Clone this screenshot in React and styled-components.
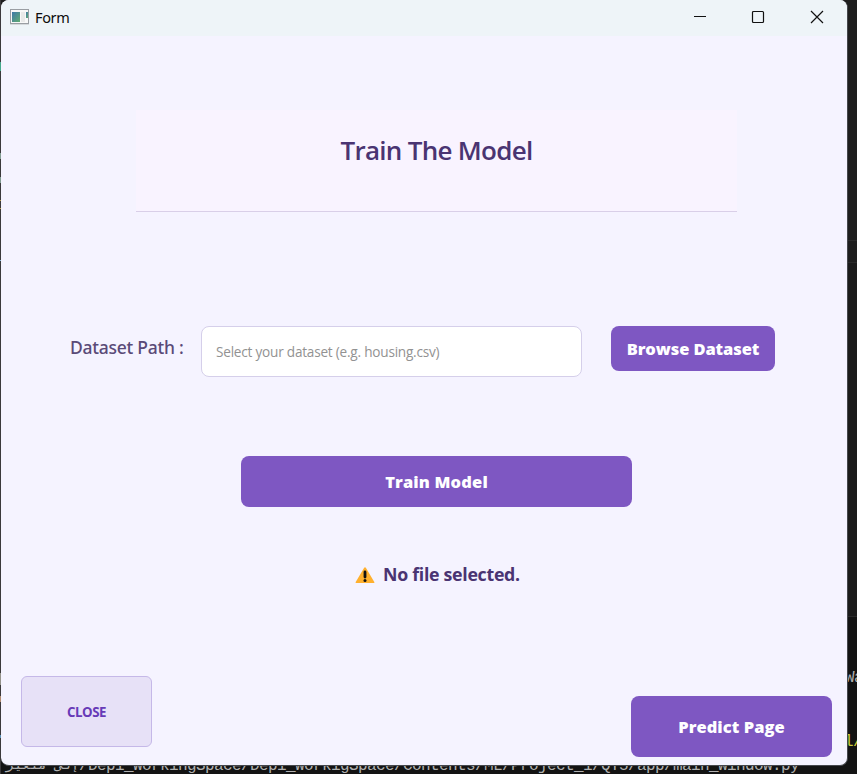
import React from "react";
import styled, { createGlobalStyle } from "styled-components";

const GlobalStyle = createGlobalStyle`
  *, *::before, *::after { box-sizing: border-box; }
  html, body { margin: 0; overflow: hidden; }
  body { font-family: "Open Sans", "Noto Sans", sans-serif; }
  button, input { font: inherit; margin: 0; }
`;

const Desktop = styled.main`
  position: relative;
  width: 857px;
  height: 774px;
  overflow: hidden;
  background: linear-gradient(90deg, #3b393b 0 1px, transparent 1px),
    linear-gradient(180deg, #1e1e1e 0 240px, #2b2b2b 240px 241px, #1e1e1e 241px 262px, #2a2a2a 262px 263px, #1b1b1b 263px 616px, #2b2b2b 616px 617px, #131313 617px);
`;

const TerminalText = styled.div`
  position: absolute;
  top: ${(p) => p.$top}px;
  left: ${(p) => p.$left}px;
  color: ${(p) => p.$color || "#b0b0b0"};
  font: ${(p) => p.$size || 16}px/18px "Liberation Mono", monospace;
  letter-spacing: ${(p) => (p.$size ? 0 : -0.6)}px;
  white-space: pre;
`;

const EdgeMark = styled.i`
  position: absolute;
  left: 0;
  width: 1px;
  top: ${(p) => p.$top}px;
  height: ${(p) => p.$height}px;
  background: ${(p) => p.$color};
`;

const Window = styled.section`
  position: absolute;
  top: 0;
  left: 1px;
  width: 847px;
  height: 766px;
  display: flex;
  flex-direction: column;
  border-right: 1px solid #45474c;
  border-bottom: 1px solid #45474c;
  border-radius: 8px;
  overflow: hidden;
  background: #f5f3ff;
`;

const TitleBar = styled.header`
  height: 36px;
  flex: none;
  display: flex;
  align-items: flex-start;
  padding-left: 9px;
  background: #eef4f8;
`;

const AppIcon = styled.svg`
  width: 19px;
  height: 16px;
  margin-top: 9px;
`;

const WindowTitle = styled.span`
  margin: 7px auto 0 6px;
  color: #0c0c0c;
  font: 14.5px/20px "Noto Sans", sans-serif;
  letter-spacing: -0.35px;
`;

const Caption = styled.button`
  width: ${(p) => p.$width || 58}px;
  height: 34px;
  padding: 0;
  border: 0;
  background: none;
  display: flex;
  align-items: center;
  justify-content: center;
  svg { width: 14px; height: 14px; }
`;

const Content = styled.div`
  flex: 1;
  display: flex;
  flex-direction: column;
`;

const Heading = styled.h1`
  width: 601px;
  height: 102px;
  margin: 74px 0 0 135px;
  padding-top: 22px;
  border-bottom: 1px solid #d9cfe8;
  background: #f9f3ff;
  color: #4a3472;
  font-weight: 600;
  font-size: 26px;
  line-height: 36px;
  letter-spacing: -0.7px;
  text-align: center;
`;

const PathRow = styled.div`
  display: flex;
  align-items: flex-start;
  margin-top: 114px;
  padding-left: 69px;
`;

const Label = styled.label`
  width: 131px;
  padding-top: 9px;
  color: #5a4a78;
  font-weight: 500;
  font-size: 17.5px;
  line-height: 24px;
  letter-spacing: -0.25px;
  white-space: nowrap;
  font-family: "Noto Sans", sans-serif;
`;

const PathInput = styled.input`
  width: 381px;
  height: 51px;
  margin-right: 29px;
  padding: 0 14px;
  border: 1px solid #d5cfea;
  border-radius: 8px;
  outline: 0;
  background: #fff;
  font-size: 13.6px;
  letter-spacing: -0.22px;
  &::placeholder { color: #929292; opacity: 1; }
`;

const PurpleButton = styled.button`
  width: ${(p) => p.$width}px;
  height: ${(p) => p.$height}px;
  padding: 1px 0 0;
  border: 0;
  border-radius: 8px;
  background: #7e57c2;
  color: #fff;
  font-weight: 800;
  font-size: 16.5px;
  line-height: 22px;
  white-space: nowrap;
  letter-spacing: ${(p) => p.$spacing || 0}px;
`;

const TrainRow = styled.div`
  display: flex;
  margin: 79px 0 0 240px;
`;

const Status = styled.p`
  display: flex;
  align-items: flex-start;
  margin: 55px 0 0 354px;
  color: #4a3472;
  font-weight: 700;
  font-size: 17.8px;
  line-height: 24px;
  letter-spacing: -0.3px;
  white-space: nowrap;
  svg { width: 20px; height: 17px; margin: 5px 8px 0 0; }
`;

const Footer = styled.footer`
  margin-top: auto;
  padding: 0 15px 8px 20px;
  display: flex;
  justify-content: space-between;
  align-items: flex-end;
`;

const CloseButton = styled.button`
  width: 131px;
  height: 71px;
  margin-bottom: 10px;
  padding: 1px 0 0;
  border: 1px solid #c5b8e8;
  border-radius: 6px;
  background: #e7e1f7;
  color: #673ab7;
  font-weight: 700;
  font-size: 13.3px;
  letter-spacing: -0.5px;
`;

export default function App() {
  return (
    <Desktop>
      <GlobalStyle />
      <EdgeMark $top={62} $height={9} $color="#45a88c" />
      <EdgeMark $top={153} $height={6} $color="#819b91" />
      <EdgeMark $top={177} $height={6} $color="#819b91" />
      <EdgeMark $top={200} $height={1} $color="#b69b51" />
      <EdgeMark $top={208} $height={1} $color="#b69b51" />
      <EdgeMark $top={260} $height={1} $color="#8bb6d9" />
      <EdgeMark $top={673} $height={12} $color="#94928a" />
      <EdgeMark $top={696} $height={6} $color="#b18b70" />
      <EdgeMark $top={735} $height={3} $color="#5c91b5" />
      <TerminalText $top={669} $left={845}>Wa</TerminalText>
      <TerminalText $top={733} $left={844} $color="#c9cc3a">l/</TerminalText>
      <TerminalText $top={757} $left={6} $size={13.5}>إلى متغير</TerminalText>
      <TerminalText $top={757} $left={79}>
        /Depi_WorkingSpace/Depi_WorkigSpace/Contents/ML/Project_1/QT5/app/main_window.py
      </TerminalText>
      <Window>
        <TitleBar>
          <AppIcon viewBox="0 0 19 16">
            <defs>
              <linearGradient id="pane" x1="0" y1="0" x2="1" y2="1">
                <stop offset="0" stopColor="#3f78a8" />
                <stop offset="1" stopColor="#62ad72" />
              </linearGradient>
            </defs>
            <rect x="0.5" y="0.5" width="18" height="14" fill="#f8f8f8" stroke="#9a9ea3" />
            <rect x="2" y="3" width="8" height="10" fill="url(#pane)" />
            <rect x="11" y="3" width="4" height="10" fill="#e9e9e9" />
            <rect x="16" y="3" width="2" height="6" fill="url(#pane)" />
            <path d="M0 15.5H19" stroke="#d5d9dc" />
          </AppIcon>
          <WindowTitle>Form</WindowTitle>
          <Caption aria-label="Minimize">
            <svg viewBox="0 0 14 14"><path d="M1 6.5H13" stroke="#111" /></svg>
          </Caption>
          <Caption aria-label="Maximize">
            <svg viewBox="0 0 14 14"><rect x="1.5" y="1.5" width="11" height="11" rx="1" fill="none" stroke="#111" strokeWidth="1.2" /></svg>
          </Caption>
          <Caption aria-label="Close window" $width={60}>
            <svg viewBox="0 0 14 14"><path d="M1 1L13 13M13 1L1 13" stroke="#111" strokeWidth="1.2" /></svg>
          </Caption>
        </TitleBar>
        <Content>
          <Heading>Train The Model</Heading>
          <PathRow>
            <Label htmlFor="path">Dataset Path :</Label>
            <PathInput id="path" placeholder="Select your dataset (e.g. housing.csv)" />
            <PurpleButton $width={164} $height={45} $spacing={-0.1}>Browse Dataset</PurpleButton>
          </PathRow>
          <TrainRow>
            <PurpleButton $width={391} $height={51} $spacing={0.15}>Train Model</PurpleButton>
          </TrainRow>
          <Status>
            <svg viewBox="0 0 20 17">
              <path d="M9 1Q10 -0.3 11 1L19.3 15Q19.8 16 18.8 16H1.2Q0.2 16 0.7 15Z" fill="#ffb02e" />
              <path d="M10 5V10" stroke="#111" strokeWidth="2.8" strokeLinecap="round" />
              <circle cx="10" cy="13.6" r="1.5" fill="#111" />
            </svg>
            No file selected.
          </Status>
          <Footer>
            <CloseButton>CLOSE</CloseButton>
            <PurpleButton $width={201} $height={61} $spacing={0.05}>Predict Page</PurpleButton>
          </Footer>
        </Content>
      </Window>
    </Desktop>
  );
}
